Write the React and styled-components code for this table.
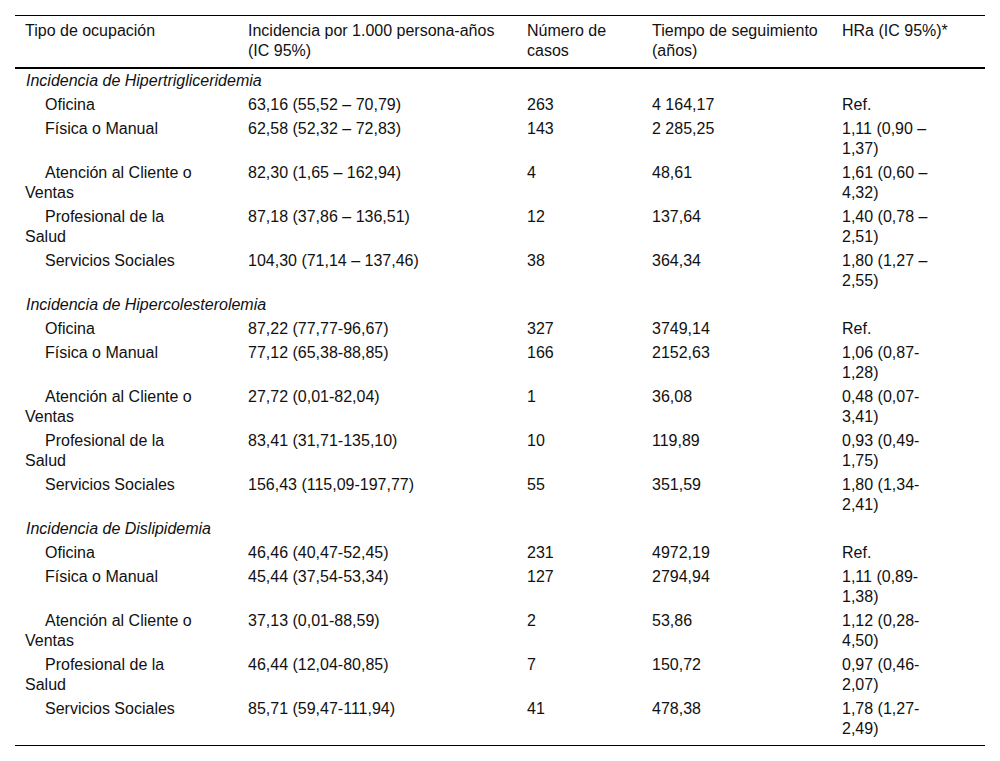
import React from 'react';
import styled, { createGlobalStyle } from 'styled-components';

const sections = [
  {
    title: 'Incidencia de Hipertrigliceridemia',
    rows: [
      ['Oficina', '63,16 (55,52 – 70,79)', '263', '4 164,17', 'Ref.'],
      ['Física o Manual', '62,58 (52,32 – 72,83)', '143', '2 285,25', '1,11 (0,90 – 1,37)'],
      ['Atención al Cliente o Ventas', '82,30 (1,65 – 162,94)', '4', '48,61', '1,61 (0,60 – 4,32)'],
      ['Profesional de la Salud', '87,18 (37,86 – 136,51)', '12', '137,64', '1,40 (0,78 – 2,51)'],
      ['Servicios Sociales', '104,30 (71,14 – 137,46)', '38', '364,34', '1,80 (1,27 – 2,55)'],
    ],
  },
  {
    title: 'Incidencia de Hipercolesterolemia',
    rows: [
      ['Oficina', '87,22 (77,77-96,67)', '327', '3749,14', 'Ref.'],
      ['Física o Manual', '77,12 (65,38-88,85)', '166', '2152,63', '1,06 (0,87-1,28)'],
      ['Atención al Cliente o Ventas', '27,72 (0,01-82,04)', '1', '36,08', '0,48 (0,07-3,41)'],
      ['Profesional de la Salud', '83,41 (31,71-135,10)', '10', '119,89', '0,93 (0,49-1,75)'],
      ['Servicios Sociales', '156,43 (115,09-197,77)', '55', '351,59', '1,80 (1,34-2,41)'],
    ],
  },
  {
    title: 'Incidencia de Dislipidemia',
    rows: [
      ['Oficina', '46,46 (40,47-52,45)', '231', '4972,19', 'Ref.'],
      ['Física o Manual', '45,44 (37,54-53,34)', '127', '2794,94', '1,11 (0,89-1,38)'],
      ['Atención al Cliente o Ventas', '37,13 (0,01-88,59)', '2', '53,86', '1,12 (0,28-4,50)'],
      ['Profesional de la Salud', '46,44 (12,04-80,85)', '7', '150,72', '0,97 (0,46-2,07)'],
      ['Servicios Sociales', '85,71 (59,47-111,94)', '41', '478,38', '1,78 (1,27-2,49)'],
    ],
  },
];

const headers = [
  'Tipo de ocupación',
  'Incidencia por 1.000 persona-años (IC 95%)',
  'Número de casos',
  'Tiempo de seguimiento (años)',
  'HRa (IC 95%)*',
];

// column widths and right paddings, so lines wrap as in the printed table
const colWidths = [223, 279, 125, 190, 153];
const padRight = [36, 9, 12, 6, 33];

const App = () => {
  return (
    <>
      <GlobalStyle />
      <Table>
        <colgroup>
          {colWidths.map((w, i) => (
            <col key={i} style={{ width: w }} />
          ))}
        </colgroup>
        <thead>
          <tr>
            {headers.map((h, i) => (
              <HeadCell key={h} $pr={padRight[i]}>
                {h}
              </HeadCell>
            ))}
          </tr>
        </thead>
        <tbody>
          {sections.map((section, s) => (
            <React.Fragment key={section.title}>
              <tr>
                <SectionCell colSpan={5}>{section.title}</SectionCell>
              </tr>
              {section.rows.map((row, r) => (
                <BodyRow key={row[0]} $last={s === sections.length - 1 && r === section.rows.length - 1}>
                  {row.map((v, i) => (
                    <Cell key={i} $pr={padRight[i]} $indent={i === 0}>
                      {v}
                    </Cell>
                  ))}
                </BodyRow>
              ))}
            </React.Fragment>
          ))}
        </tbody>
      </Table>
    </>
  );
};

const GlobalStyle = createGlobalStyle`
  body {
    margin: 0;
    background: #fff;
    font-family: "Liberation Sans", Arial, sans-serif;
    color: #111;
  }
`;

const Table = styled.table`
  margin: 15px;
  width: 970px;
  table-layout: fixed;
  border-collapse: collapse;
  border-top: 1px solid #000;
  border-bottom: 1px solid #000;
  font-size: 16px;
  line-height: 20px;
`;

const HeadCell = styled.th`
  text-align: left;
  font-weight: normal;
  vertical-align: top;
  padding: 5px ${({ $pr }) => $pr}px 6px 10px;
  border-bottom: 2px solid #000;
`;

const SectionCell = styled.td`
  font-style: italic;
  padding: 2px 10px 2px 11px;
`;

const BodyRow = styled.tr`
  td {
    padding-bottom: ${({ $last }) => ($last ? '6px' : '2px')};
  }
`;

const Cell = styled.td`
  vertical-align: top;
  padding: 2px ${({ $pr }) => $pr}px 2px 10px;
  text-indent: ${({ $indent }) => ($indent ? '20px' : '0')};
`;

export default App;
